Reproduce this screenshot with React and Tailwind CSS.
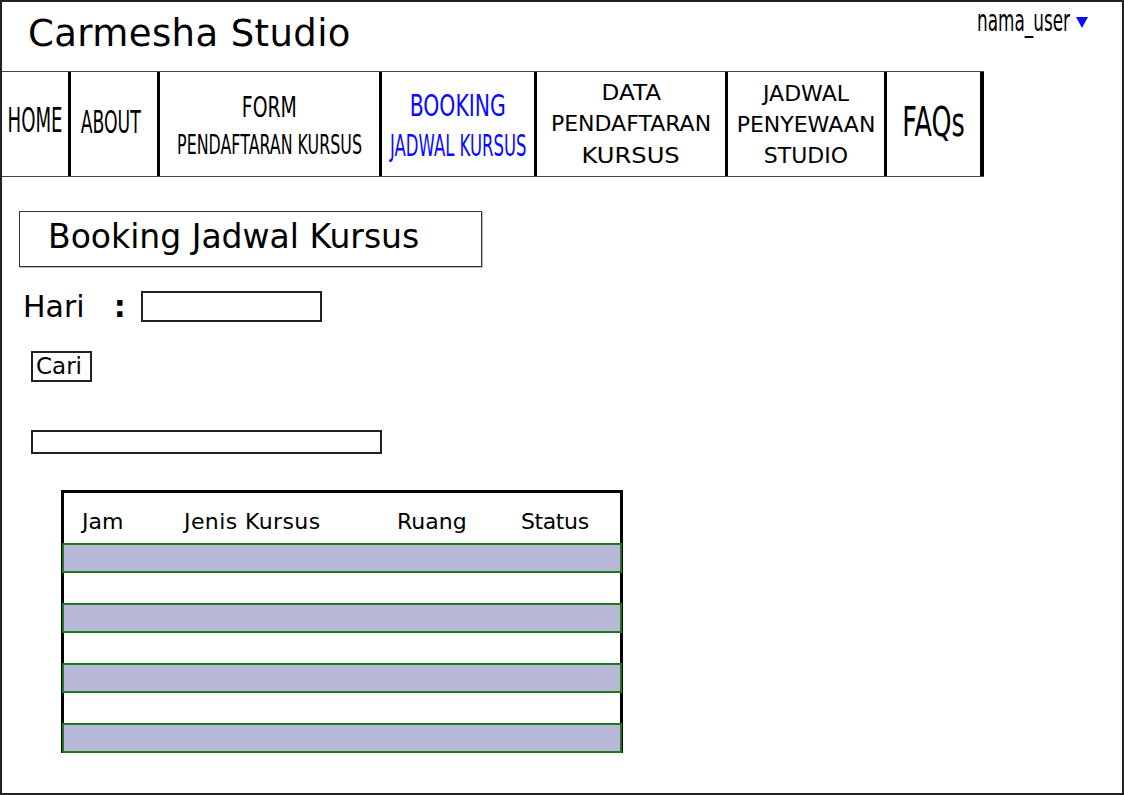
import React from "react";

function NavCell({ w, last, className = "", children }) {
  return (
    <div
      className={`${w} shrink-0 ${last ? "border-r-4" : "border-r-[3px]"} border-black flex flex-col items-center ${className}`}
    >
      {children}
    </div>
  );
}

export default function App() {
  const rows = [true, false, true, false, true, false, true];
  return (
    <div className="w-[1124px] h-[795px] border-2 border-[#222] bg-white text-black font-['DejaVu_Sans',sans-serif] overflow-hidden">
      {/* header */}
      <div className="h-[69px] flex justify-between">
        <div className="pl-[26px] pt-[13px] text-[37px] tracking-[0.4px] leading-none whitespace-nowrap">Carmesha Studio</div>
        <div className="flex items-start pt-[3px] pr-[34px]">
          <span className="inline-block w-[93px]">
            <span className="inline-block whitespace-nowrap text-[31px] leading-none origin-left scale-x-[0.544]">nama_user</span>
          </span>
          <svg className="ml-[6px] mt-[12px]" width="12" height="11" viewBox="0 0 12 11">
            <polygon points="0,0 12,0 6,11" fill="#0a0aff" />
          </svg>
        </div>
      </div>

      {/* nav */}
      <div className="w-[982px] h-[106px] flex border-y border-[#444]">
        <NavCell w="w-[69px]" className="justify-center pb-[8px]">
          <span className="inline-block whitespace-nowrap text-[33px] leading-none scale-x-[0.55]">HOME</span>
        </NavCell>
        <NavCell w="w-[89px]" className="justify-center pb-[5px] pr-[6px]">
          <span className="inline-block whitespace-nowrap text-[32px] leading-none scale-x-[0.54]">ABOUT</span>
        </NavCell>
        <NavCell w="w-[222px]" className="pt-[21px]">
          <span className="inline-block whitespace-nowrap text-[29px] leading-none scale-x-[0.65]">FORM</span>
          <span className="mt-[10px] inline-block whitespace-nowrap text-[26px] leading-none scale-x-[0.61]">PENDAFTARAN KURSUS</span>
        </NavCell>
        <NavCell w="w-[155px]" className="pt-[19px] text-[#0a0aff]">
          <span className="inline-block whitespace-nowrap text-[30px] leading-none scale-x-[0.68]">BOOKING</span>
          <span className="mt-[10px] inline-block whitespace-nowrap text-[30px] leading-none scale-x-[0.55]">JADWAL KURSUS</span>
        </NavCell>
        <NavCell w="w-[191px]" className="justify-center text-[22px] leading-[31.5px] text-center">
          <span className="inline-block scale-x-[1.05]">DATA</span>
          <span>PENDAFTARAN</span>
          <span className="inline-block scale-x-[1.1]">KURSUS</span>
        </NavCell>
        <NavCell w="w-[159px]" className="justify-center text-[22px] leading-[31px] text-center">
          <span>JADWAL</span>
          <span>PENYEWAAN</span>
          <span>STUDIO</span>
        </NavCell>
        <NavCell w="w-[97px]" last className="justify-center pb-[4px]">
          <span className="inline-block whitespace-nowrap text-[41px] leading-none scale-x-[0.62]">FAQs</span>
        </NavCell>
      </div>

      {/* content */}
      <div className="pl-[17px] pt-[34px]">
        <div className="w-[463px] h-[56px] border border-[#333] pl-[28px] pt-[8px] shadow-[1px_1px_0_#bbb]">
          <span className="text-[33px] leading-none whitespace-nowrap">Booking Jadwal Kursus</span>
        </div>

        <div className="mt-[24px] flex items-center h-[31px]">
          <span className="ml-[4px] text-[30px] leading-none">Hari</span>
          <span className="ml-[29px] text-[30px] leading-none font-bold">:</span>
          <div className="ml-[15px] w-[181px] h-[31px] border-2 border-[#222]" />
        </div>

        <div className="mt-[29px] ml-[12px] w-[61px] h-[31px] border-2 border-[#222] flex items-center pl-[3px] text-[23px] leading-none">
          Cari
        </div>

        <div className="mt-[48px] ml-[12px] w-[351px] h-[24px] border-2 border-[#222]" />

        <div className="mt-[36px] ml-[42px] w-[562px] border-t-[3px] border-x-[3px] border-black">
          <div className="h-[50px] grid grid-cols-[102px_213px_124px_1fr] items-center pl-[18px] pt-[8px] text-[22px] leading-none">
            <span>Jam</span>
            <span className="tracking-[0.4px]">Jenis Kursus</span>
            <span>Ruang</span>
            <span className="tracking-[-0.4px]">Status</span>
          </div>
          {rows.map((p, i) =>
            p ? (
              <div key={i} className="h-[30px] -mx-[2px] bg-[#b8b8d8] border-2 border-[#1c7a1c]" />
            ) : (
              <div key={i} className="h-[30px] bg-white" />
            )
          )}
        </div>
      </div>
    </div>
  );
}
